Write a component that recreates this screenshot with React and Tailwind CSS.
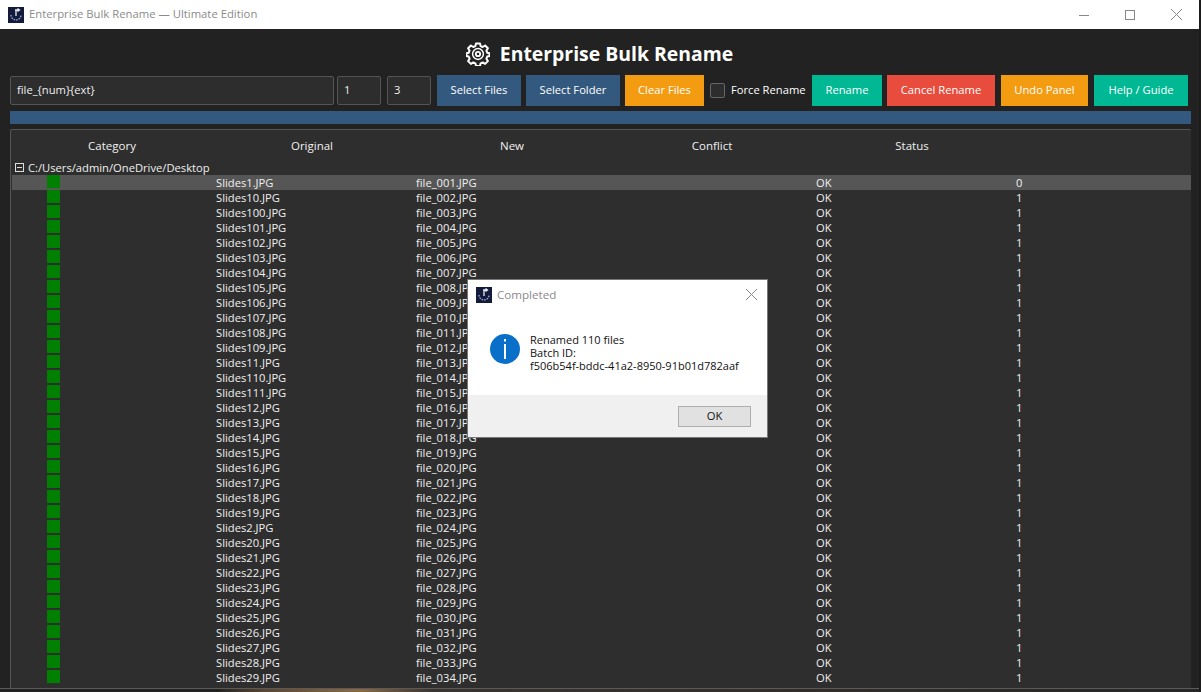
import React from "react";

const names = ["Slides1","Slides10","Slides100","Slides101","Slides102","Slides103","Slides104","Slides105","Slides106","Slides107","Slides108","Slides109","Slides11","Slides110","Slides111","Slides12","Slides13","Slides14","Slides15","Slides16","Slides17","Slides18","Slides19","Slides2","Slides20","Slides21","Slides22","Slides23","Slides24","Slides25","Slides26","Slides27","Slides28","Slides29"];

function AppIcon({ size }) {
  return (
    <svg width={size} height={size} viewBox="0 0 16 16" className="shrink-0">
      <rect width="16" height="16" fill="#141b3a" />
      <path d="M3 8a5 5 0 0 0 10 0" fill="none" stroke="#8fa8d8" strokeWidth="1.4" strokeDasharray="1.6 1" />
      <path d="M7 3h4M9.5 1.5 11.5 3 9.5 4.5M8 3v6" fill="none" stroke="#e6ecf8" strokeWidth="1.3" />
    </svg>
  );
}

function Gear() {
  return (
    <svg width="24" height="24" viewBox="0 0 24 24" fill="none" stroke="#fff" strokeWidth="2" className="shrink-0">
      <path d="M10 1.4h4l.6 2.7 2.1.9 2.4-1.5 2.8 2.8-1.5 2.4.9 2.1 2.2.5v2.8l-2.2.5-.9 2.1 1.5 2.4-2.8 2.8-2.4-1.5-2.1.9-.6 2.7h-4l-.6-2.7-2.1-.9-2.4 1.5-2.8-2.8 1.5-2.4-.9-2.1-2.2-.5v-2.8l2.2-.5.9-2.1-1.5-2.4 2.8-2.8 2.4 1.5 2.1-.9z" strokeLinejoin="round" />
      <circle cx="12" cy="12" r="5.4" strokeWidth="1.5" />
      <circle cx="12" cy="12" r="2.2" strokeWidth="1.8" />
    </svg>
  );
}

function Btn({ className, children }) {
  return (
    <button className={`h-[31px] shrink-0 text-white text-[11.2px] whitespace-nowrap flex items-center justify-center ${className}`}>
      {children}
    </button>
  );
}

function Field({ className, children }) {
  return (
    <div className={`h-[29px] shrink-0 rounded-[2px] border border-[#555] bg-[#2d2d2d] text-[#f0f0f0] text-[11.2px] flex items-center px-[6px] ${className}`}>
      {children}
    </div>
  );
}

export default function App() {
  return (
    <div className="relative w-[1201px] h-[692px] overflow-hidden flex bg-[#1b1b1b] font-['Open_Sans','Noto_Sans',sans-serif]">
      <div className="w-[1199px] h-[692px] shrink-0 flex flex-col bg-[#222222]">
        <div className="h-[29px] shrink-0 bg-white flex items-center pl-2">
          <AppIcon size={16} />
          <span className="ml-[5px] text-[11.3px] text-[#8a8a8a]">Enterprise Bulk Rename — Ultimate Edition</span>
          <div className="ml-auto flex items-center">
            <div className="w-[46px] flex justify-center">
              <svg width="10" height="10" viewBox="0 0 10 10"><path d="M0 5.5h10" stroke="#888" /></svg>
            </div>
            <div className="w-[46px] flex justify-center">
              <svg width="10" height="10" viewBox="0 0 10 10"><rect x=".5" y=".5" width="9" height="9" fill="none" stroke="#888" /></svg>
            </div>
            <div className="w-[46px] flex justify-center">
              <svg width="11" height="11" viewBox="0 0 11 11"><path d="M0 0l11 11M11 0L0 11" stroke="#888" /></svg>
            </div>
          </div>
        </div>

        <div className="h-[46px] shrink-0 flex items-center justify-center gap-[10px] pt-[4px]">
          <Gear />
          <span className="text-white text-[19.4px] font-bold leading-none">Enterprise Bulk Rename</span>
        </div>

        <div className="h-[31px] shrink-0 flex items-center pl-[10px]">
          <Field className="w-[324px]">file_{"{num}{ext}"}</Field>
          <Field className="w-[44px] ml-[3px]">1</Field>
          <Field className="w-[44px] ml-[6px]">3</Field>
          <Btn className="w-[84px] ml-[6px] bg-[#34597e]">Select Files</Btn>
          <Btn className="w-[94px] ml-[5px] bg-[#34597e]">Select Folder</Btn>
          <Btn className="w-[79px] ml-[5px] bg-[#f39c12]">Clear Files</Btn>
          <div className="flex items-center ml-[6px] w-[102px] shrink-0">
            <div className="w-[15px] h-[15px] rounded-[2px] border border-[#666] bg-[#2d2d2d]" />
            <span className="ml-[6px] text-[11.2px] text-white whitespace-nowrap">Force Rename</span>
          </div>
          <Btn className="w-[70px] bg-[#00b894]">Rename</Btn>
          <Btn className="w-[108px] ml-[5px] bg-[#e74c3c]">Cancel Rename</Btn>
          <Btn className="w-[87px] ml-[6px] bg-[#f39c12]">Undo Panel</Btn>
          <Btn className="w-[94px] ml-[6px] bg-[#00b894]">Help / Guide</Btn>
        </div>

        <div className="h-[13px] shrink-0 mt-[5px] ml-[10px] w-[1181px] bg-[#34597e]" />

        <div className="mt-[5px] ml-[10px] w-[1181px] h-[559px] shrink-0 overflow-hidden rounded-t-[2px] border-l border-t border-[#555] bg-[#2e2e2e] text-[11.2px] text-[#f0f0f0] leading-[15px] pl-px">
          <div className="h-[30px] grid grid-cols-[200px_200px_200px_200px_200px] items-center text-center text-[11.5px]">
            <span>Category</span>
            <span>Original</span>
            <span>New</span>
            <span>Conflict</span>
            <span>Status</span>
          </div>
          <div className="h-[15px] flex items-center pl-[2px]">
            <svg width="9" height="9" viewBox="0 0 9 9" className="ml-[1px]">
              <rect x=".5" y=".5" width="8" height="8" fill="none" stroke="#ddd" />
              <path d="M2 4.5h5" stroke="#ddd" />
            </svg>
            <span className="ml-[4px]">C:/Users/admin/OneDrive/Desktop</span>
          </div>
          {names.map((n, i) => (
            <div key={n} className={`h-[15px] grid grid-cols-[200px_200px_200px_200px_200px_1fr] ${i === 0 ? "bg-[#565656]" : ""}`}>
              <div className="pl-[35px]"><div className="w-[13px] h-[13px] bg-[#008000]" /></div>
              <span className="pl-1">{n}.JPG</span>
              <span className="pl-1">file_{String(i + 1).padStart(3, "0")}.JPG</span>
              <span />
              <span className="pl-1">OK</span>
              <span className="pl-1">{i === 0 ? 0 : 1}</span>
            </div>
          ))}
        </div>

        <div className="h-[4px] shrink-0 border-t border-[#5a5a5a] bg-[linear-gradient(90deg,#222_0%,#222_18%,#5a4632_22%,#8a6a45_30%,#3a3430_36%,#262626_100%)]" />
      </div>

      <div className="absolute left-[468px] top-[280px] w-[299px] h-[157px] bg-white shadow-[0_0_0_1px_#777] flex flex-col">
        <div className="h-[29px] flex items-center pl-2 shrink-0">
          <AppIcon size={16} />
          <span className="ml-[5px] text-[11.6px] text-[#8a8a8a]">Completed</span>
          <svg width="11" height="11" viewBox="0 0 11 11" className="ml-auto mr-[10px]"><path d="M0 0l11 11M11 0L0 11" stroke="#888" /></svg>
        </div>
        <div className="flex-1 flex items-start pl-[22px] pt-[25px]">
          <div className="w-[30px] h-[30px] rounded-full bg-[#0a6fc9] flex items-center justify-center shrink-0">
            <svg width="6" height="20" viewBox="0 0 6 20"><rect x="2" y="0" width="2" height="2.5" fill="#fff" /><rect x="2" y="5" width="2" height="15" fill="#fff" /></svg>
          </div>
          <div className="ml-[10px] -mt-[1px] text-[11px] leading-[13px] text-[#111]">
            <div>Renamed 110 files</div>
            <div>Batch ID:</div>
            <div>f506b54f-bddc-41a2-8950-91b01d782aaf</div>
          </div>
        </div>
        <div className="h-[42px] bg-[#f0f0f0] shrink-0 flex items-center justify-end pr-4">
          <button className="w-[73px] h-[21px] border border-[#adadad] bg-[#e1e1e1] text-[11.2px] text-[#111]">OK</button>
        </div>
      </div>
    </div>
  );
}
